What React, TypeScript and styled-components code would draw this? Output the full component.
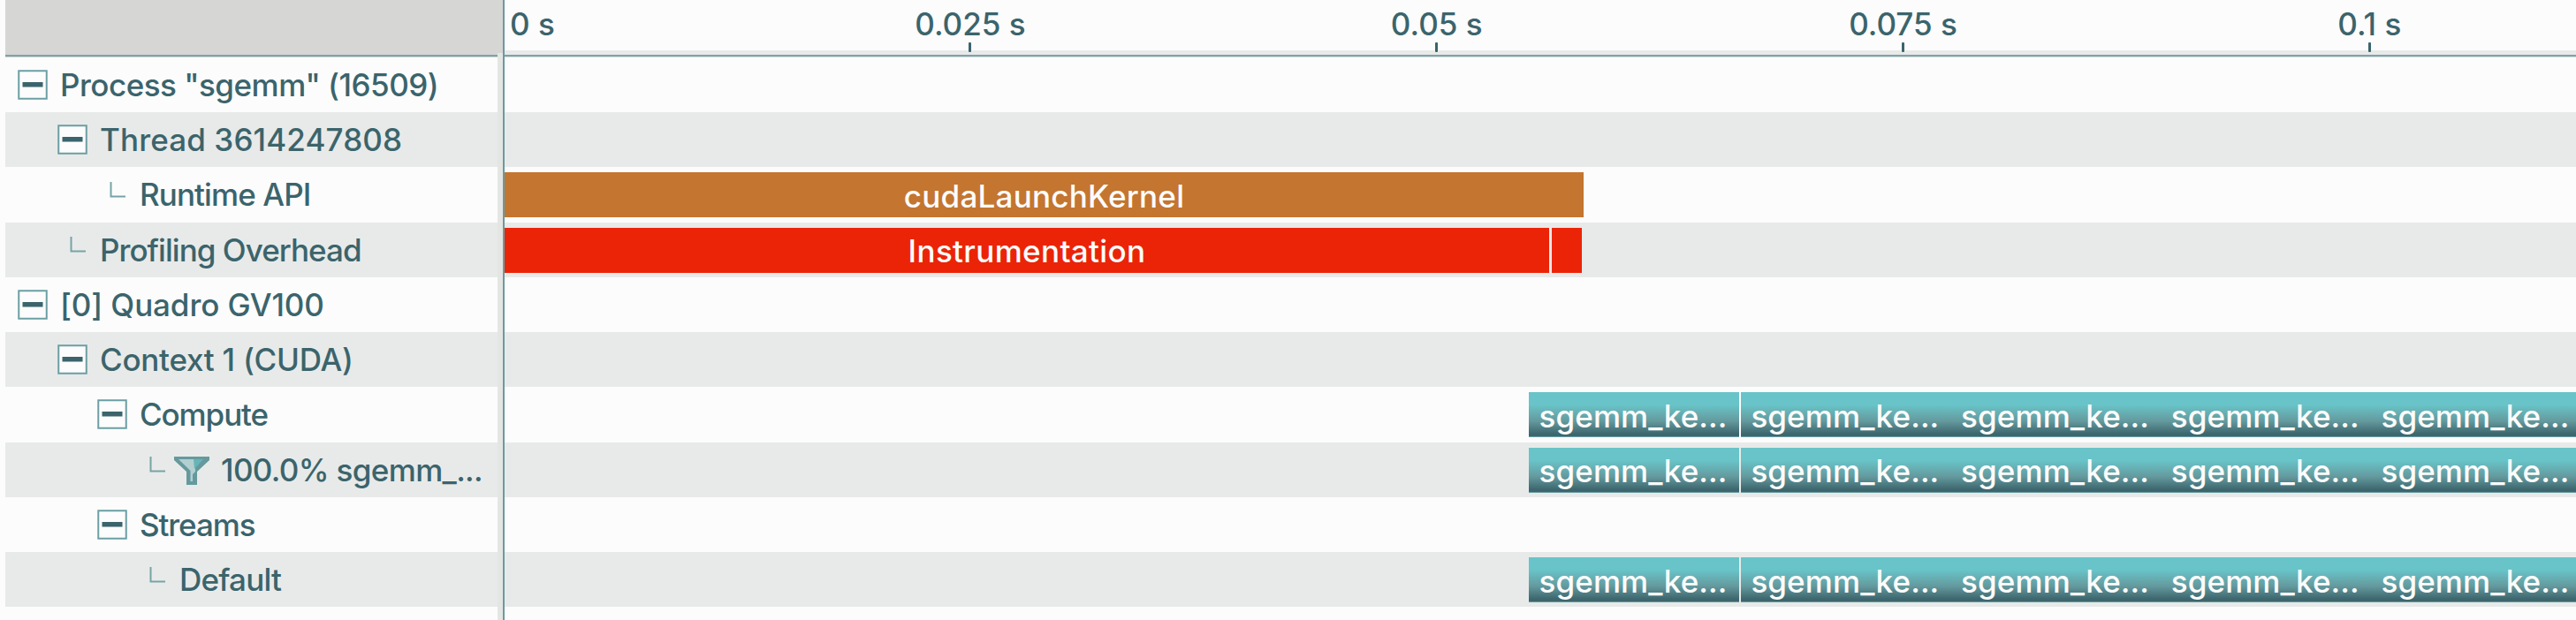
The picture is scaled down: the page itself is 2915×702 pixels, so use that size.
import React from 'react';
import styled, { createGlobalStyle } from 'styled-components';

const Global = createGlobalStyle`
  * { box-sizing: border-box; }
  body { margin: 0; background: #fcfcfc; overflow: hidden; }
`;

const ROW = 62.25;
const KERNEL_FILL = 'linear-gradient(#68c4c8 28%, #649a9e 64%, #3e686f 92%, #3b646c 97%, #649a9e 98%)';

const Page = styled.main`
  width: 2915px;
  height: 702px;
  padding-left: 6px;
  display: flex;
  overflow: hidden;
  background: #fcfcfc;
  color: #3b646c;
  font-family: Inter, "Liberation Sans", sans-serif;
  font-size: 35px;
  font-weight: 500;
`;

const Sidebar = styled.aside`
  width: 557px;
  flex: none;
`;

const SidebarHeader = styled.div`
  height: 64.75px;
  background: linear-gradient(#d6d6d4 62px, #7aa5a8 62px, #7aa5a8 64px, #cfcfcc 64px);
`;

const Divider = styled.div`
  width: 8px;
  flex: none;
  background: linear-gradient(#d6d6d4 60px, #e4e6e4 60px);
  border-right: 2px solid #6b9a9e;
`;

const Timeline = styled.section`
  flex: 1;
  min-width: 0;
  overflow: hidden;
`;

const Ruler = styled.header`
  height: 64.75px;
  padding-top: 6px;
  display: flex;
  background: linear-gradient(#fcfcfc 57px, #e8eae9 57px, #e8eae9 62px, #7aa5a8 62px, #7aa5a8 64px, #d8dbd9 64px);
`;

const Origin = styled.div`
  width: 263px;
  padding-left: 6px;
  flex: none;
  line-height: 42px;
`;

const Tick = styled.div`
  width: 527.8px;
  flex: none;
  display: flex;
  flex-direction: column;
  align-items: center;
  line-height: 42px;
  white-space: nowrap;
  &::after {
    content: '';
    width: 3px;
    height: 11px;
    border-radius: 1px;
    background: #3b646c;
  }
`;

const TreeRow = styled.div<{ $odd: boolean; $indent: number }>`
  height: ${ROW}px;
  padding-left: ${(p) => p.$indent}px;
  display: flex;
  align-items: center;
  background: ${(p) => (p.$odd ? '#e8eae9' : '#fcfcfc')};
`;

const Lane = styled.div<{ $odd: boolean; $start: number }>`
  height: ${ROW}px;
  padding: 6px 0 0 ${(p) => p.$start}px;
  display: flex;
  background: ${(p) => (p.$odd ? '#e8eae9' : '#fcfcfc')};
`;

const Label = styled.span<{ $gap: number; $spacing: number }>`
  margin-left: ${(p) => p.$gap}px;
  letter-spacing: ${(p) => p.$spacing}px;
  line-height: 44px;
  white-space: nowrap;
`;

const Bar = styled.div<{ $width: number; $color: string; $spacing?: number; $gapAfter?: number }>`
  width: ${(p) => p.$width}px;
  height: 51px;
  margin-right: ${(p) => p.$gapAfter ?? 0}px;
  padding-top: 2px;
  flex: none;
  display: flex;
  align-items: center;
  justify-content: center;
  background: ${(p) => p.$color};
  color: #fcfcfc;
  letter-spacing: ${(p) => p.$spacing ?? 0}px;
  white-space: nowrap;
`;

const KernelBar = styled(Bar)`
  padding-right: 2px;
  letter-spacing: 0.1px;
`;

const KernelRun = styled.div`
  display: flex;
  flex: none;
  height: 51px;
  background: ${KERNEL_FILL};
`;

const BranchIcon = styled.svg`
  margin-bottom: 11px;
  flex: none;
`;

const FunnelIcon = styled.svg`
  margin: 3px 0 0 10px;
  flex: none;
`;

const Toggle = () => (
  <svg width="34" height="34" viewBox="0 0 34 34" fill="none">
    <rect x="1.25" y="1.25" width="31.5" height="31.5" fill="#fcfcfc" stroke="#6b9fa3" strokeWidth="2" />
    <rect x="5.5" y="14" width="23" height="5.5" fill="#3b646c" />
  </svg>
);

const Branch = () => (
  <BranchIcon width="18" height="18" viewBox="0 0 18 18" fill="none">
    <path d="M1.5 0V16.5H18" stroke="#76a4a7" strokeWidth="2" />
  </BranchIcon>
);

const Funnel = () => (
  <FunnelIcon width="40" height="32" viewBox="0 0 40 32">
    <path d="M0 0H40V4L26 17V32H14V17L0 4Z" fill="#649a9e" />
    <path d="M5 3H24V17L21 20V28H18.5V16Z" fill="#b4cfd0" />
    <path d="M22 3H33L23 14Z" fill="#68b4b8" />
  </FunnelIcon>
);

type Item = {
  text: string;
  indent: number;
  kind: 'toggle' | 'branch' | 'filter';
  gap: number;
  spacing: number;
  lane?: 'api' | 'overhead' | 'kernels';
};

const items: Item[] = [
  { text: 'Process "sgemm" (16509)', indent: 14, kind: 'toggle', gap: 14, spacing: -0.5 },
  { text: 'Thread 3614247808', indent: 59, kind: 'toggle', gap: 14, spacing: 0.12 },
  { text: 'Runtime API', indent: 118, kind: 'branch', gap: 16, spacing: -0.9, lane: 'api' },
  { text: 'Profiling Overhead', indent: 73, kind: 'branch', gap: 16, spacing: -0.95, lane: 'overhead' },
  { text: '[0] Quadro GV100', indent: 14, kind: 'toggle', gap: 14, spacing: -0.1 },
  { text: 'Context 1 (CUDA)', indent: 59, kind: 'toggle', gap: 14, spacing: -0.25 },
  { text: 'Compute', indent: 104, kind: 'toggle', gap: 14, spacing: -1.1, lane: 'kernels' },
  { text: '100.0% sgemm_...', indent: 163, kind: 'filter', gap: 13, spacing: -0.65, lane: 'kernels' },
  { text: 'Streams', indent: 104, kind: 'toggle', gap: 14, spacing: -1.1 },
  { text: 'Default', indent: 163, kind: 'branch', gap: 16, spacing: -0.8, lane: 'kernels' },
];

const Kernels = () => (
  <>
    <KernelBar $width={238} $color={KERNEL_FILL} $gapAfter={2}>sgemm_ke...</KernelBar>
    <KernelRun>
      {[0, 1, 2, 3].map((n) => (
        <KernelBar key={n} $width={237.7} $color="transparent">sgemm_ke...</KernelBar>
      ))}
    </KernelRun>
  </>
);

export default function App() {
  return (
    <Page>
      <Global />
      <Sidebar>
        <SidebarHeader />
        {items.map((it, i) => (
          <TreeRow key={it.text} $odd={i % 2 === 1} $indent={it.indent}>
            {it.kind === 'toggle' ? <Toggle /> : <Branch />}
            {it.kind === 'filter' && <Funnel />}
            <Label $gap={it.gap} $spacing={it.spacing}>{it.text}</Label>
          </TreeRow>
        ))}
      </Sidebar>
      <Divider />
      <Timeline>
        <Ruler>
          <Origin>0 s</Origin>
          <Tick>0.025 s</Tick>
          <Tick>0.05 s</Tick>
          <Tick>0.075 s</Tick>
          <Tick>0.1 s</Tick>
        </Ruler>
        {items.map((it, i) => (
          <Lane key={it.text} $odd={i % 2 === 1} $start={it.lane === 'kernels' ? 1159 : 0}>
            {it.lane === 'api' && <Bar $width={1221} $color="#c4752f" $spacing={0.25}>cudaLaunchKernel</Bar>}
            {it.lane === 'overhead' && (
              <>
                <Bar $width={1182} $color="#eb2408" $spacing={0.35} $gapAfter={3}>Instrumentation</Bar>
                <Bar $width={34} $color="#eb2408" />
              </>
            )}
            {it.lane === 'kernels' && <Kernels />}
          </Lane>
        ))}
      </Timeline>
    </Page>
  );
}
